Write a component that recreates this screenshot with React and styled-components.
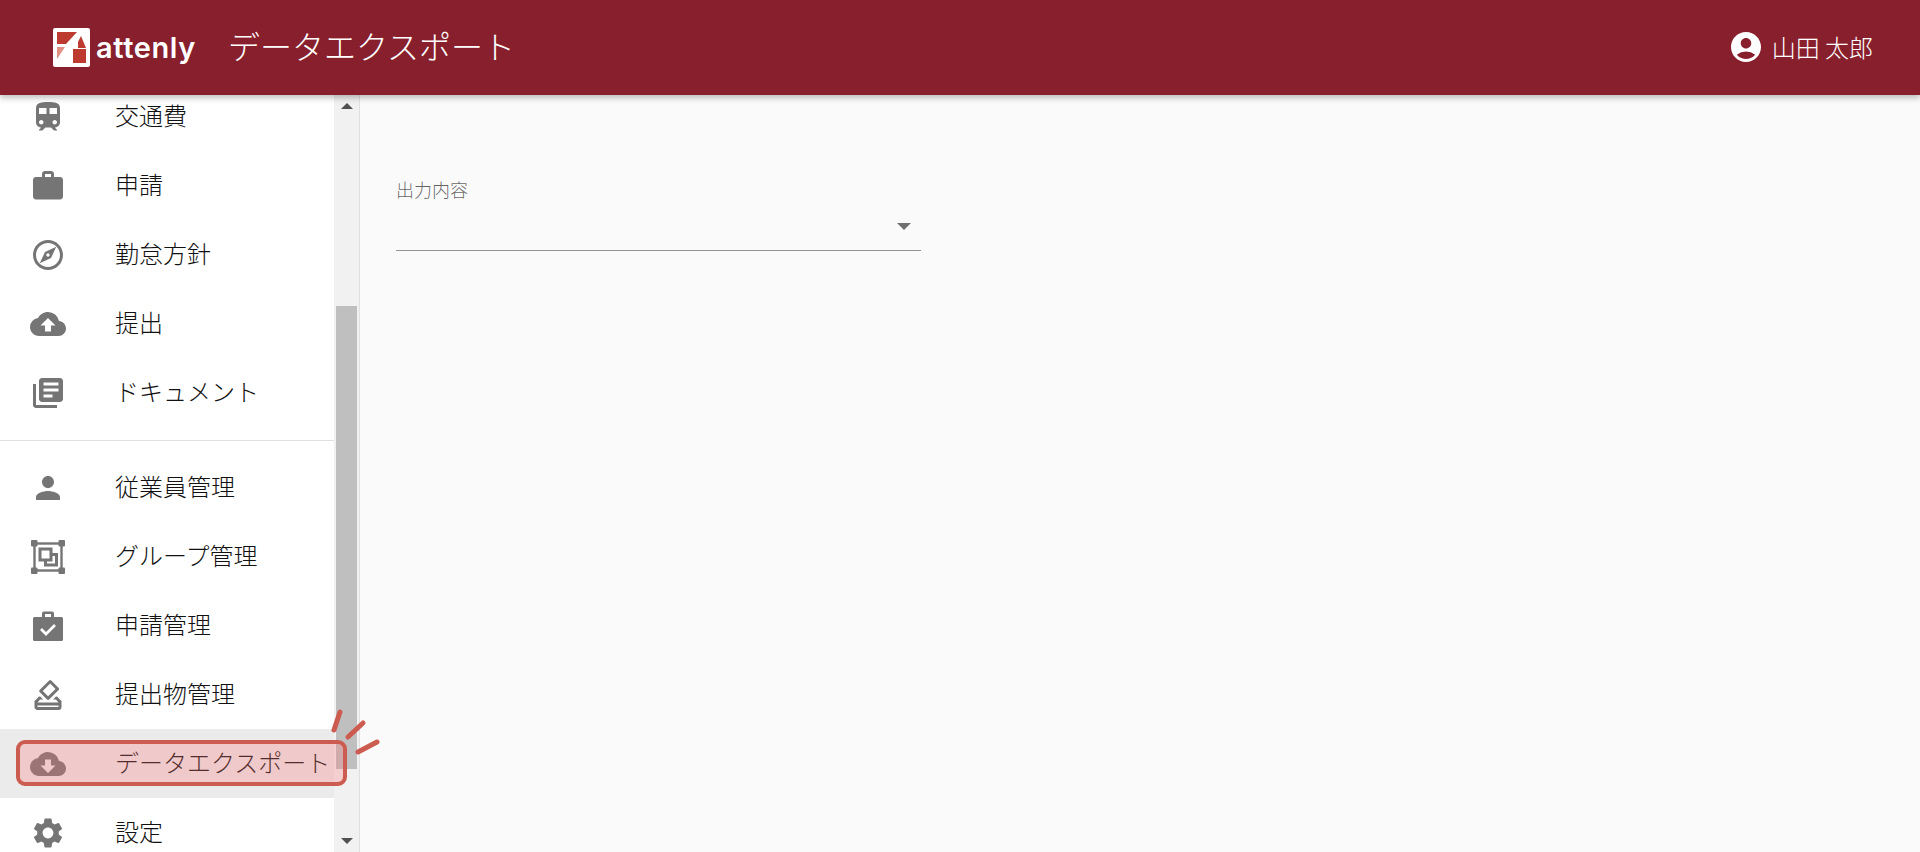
import React from "react";
import styled, { createGlobalStyle } from "styled-components";
import {
  MdTrain,
  MdWork,
  MdOutlineExplore,
  MdCloudUpload,
  MdLibraryBooks,
  MdPerson,
  MdOutlineHowToVote,
  MdCloudDownload,
  MdSettings,
  MdAccountCircle,
} from "react-icons/md";

const Global = createGlobalStyle`
  html, body { margin: 0; height: 100%; overflow: hidden; }
  body { background: #fafafa; font-family: "Noto Sans CJK JP", "Noto Sans", sans-serif; }
  #root { height: 100%; }
`;

const Page = styled.div`
  display: flex;
  flex-direction: column;
  width: 1920px;
  height: 852px;
  overflow: hidden;
`;

const Header = styled.header`
  position: relative;
  z-index: 2;
  flex: 0 0 95px;
  display: flex;
  align-items: center;
  padding: 0 47px 0 53px;
  background: #881f2d;
  color: #fff;
  box-shadow: 0 3px 6px rgba(0, 0, 0, 0.25);
`;

const Logo = styled.div`
  display: flex;
  align-items: center;
  gap: 6px;
  width: 175px;
  flex: none;
`;

const LogoWord = styled.span`
  font-family: "Inter", sans-serif;
  font-size: 29px;
  font-weight: 600;
  line-height: 38px;
  letter-spacing: 0.6px;
`;

const Title = styled.h1`
  margin: -6px 0 0;
  flex: 1;
  font-size: 32px;
  font-weight: 300;
  line-height: 44px;
`;

const User = styled.div`
  display: flex;
  align-items: center;
  gap: 8px;
  font-size: 24px;
  font-weight: 300;
  line-height: 32px;
  margin-top: -2px;
`;

const Body = styled.div`
  position: relative;
  flex: 1;
  display: flex;
  min-height: 0;
`;

const Sidebar = styled.aside`
  position: relative;
  flex: 0 0 360px;
  display: flex;
  background: #fff;
  border-right: 1px solid #e0e0e0;
  box-sizing: border-box;
  overflow: hidden;
`;

const MenuViewport = styled.nav`
  flex: 1;
  min-width: 0;
  overflow: hidden;
`;

const MenuScroll = styled.div`
  margin-top: -13px;
`;

const Row = styled.div`
  display: flex;
  align-items: center;
  height: 69px;
  padding-left: 30px;
  background: ${(p) => (p.$active ? "#ebebeb" : "transparent")};
`;

const IconSlot = styled.span`
  flex: 0 0 85px;
  display: flex;
  color: #757575;
`;

const Label = styled.span`
  font-size: 24px;
  font-weight: 300;
  line-height: 30px;
  margin-top: -3px;
  color: #111;
  white-space: nowrap;
`;

const Divider = styled.hr`
  margin: 13px 0 12px;
  border: 0;
  border-top: 1px solid #e0e0e0;
`;

const Scrollbar = styled.div`
  flex: 0 0 25px;
  display: flex;
  flex-direction: column;
  background: #f1f1f1;
`;

const ArrowCap = styled.div`
  flex: 0 0 22px;
  display: flex;
  align-items: center;
  justify-content: center;
`;

const ScrollTrack = styled.div`
  flex: 1;
  padding: 189px 2px 61px 2px;
  display: flex;
`;

const Thumb = styled.div`
  flex: 1;
  background: #bfbfbf;
`;

const Highlight = styled.div`
  position: absolute;
  left: 16px;
  top: 645px;
  width: 331px;
  height: 46px;
  box-sizing: border-box;
  border: 4.500px solid #cd5c50;
  border-radius: 9px;
  background: rgba(255, 120, 120, 0.28);
  pointer-events: none;
`;

const Sparks = styled.svg`
  position: absolute;
  left: 328px;
  top: 605px;
  z-index: 3;
  overflow: visible;
`;

const Main = styled.main`
  flex: 1;
  padding: 84px 36px 0;
  background: #fafafa;
`;

const Field = styled.div`
  width: 525px;
  display: flex;
  flex-direction: column;
`;

const FieldLabel = styled.label`
  font-size: 18px;
  font-weight: 300;
  line-height: 20px;
  color: rgba(0, 0, 0, 0.62);
`;

const Select = styled.div`
  height: 52px;
  display: flex;
  align-items: center;
  justify-content: flex-end;
  padding-right: 10px;
  border-bottom: 1.5px solid #949494;
  box-sizing: border-box;
`;

const Caret = styled.span`
  width: 0;
  height: 0;
  border-left: 7px solid transparent;
  border-right: 7px solid transparent;
  border-top: 7px solid #707070;
  margin-top: 3px;
`;

const ArrowGlyph = styled.span`
  width: 0;
  height: 0;
  border-left: 6px solid transparent;
  border-right: 6px solid transparent;
  ${(p) => (p.$down ? "border-top: 6px solid #505050;" : "border-bottom: 6px solid #505050;")}
`;

const LogoMark = () => (
  <svg width="37" height="39" viewBox="0 0 37 39">
    <rect width="37" height="39" rx="2" fill="#fff" />
    <path d="M4 4h20L13 16H4z" fill="#bd3a30" />
    <path d="M4 19h8L4 31z" fill="#e28f84" />
    <path d="M20 21h13v14H20z" fill="#bd3a30" />
    <path d="M25 14l3-6 5 12h-8z" fill="#bd3a30" />
    <path d="M11 35 L28 3" stroke="#fff" strokeWidth="2.500" fill="none" />
  </svg>
);

const GroupIcon = () => (
  <svg width="36" height="36" viewBox="0 0 36 36" fill="none">
    <rect x="4.500" y="4.500" width="27" height="27" stroke="#757575" strokeWidth="2.400" />
    <g fill="#757575">
      <rect x="1" y="1" width="6.500" height="6.500" rx="1" />
      <rect x="28.500" y="1" width="6.500" height="6.500" rx="1" />
      <rect x="1" y="28.500" width="6.500" height="6.500" rx="1" />
      <rect x="28.500" y="28.500" width="6.500" height="6.500" rx="1" />
    </g>
    <rect x="10" y="10" width="11" height="11" stroke="#757575" strokeWidth="3" />
    <path d="M21 15.500h5.500V26H15.500v-5" stroke="#757575" strokeWidth="3" />
  </svg>
);

const CaseCheckIcon = () => (
  <svg width="36" height="36" viewBox="0 0 36 36">
    <path
      d="M12 5.500a2 2 0 0 1 2-2h8a2 2 0 0 1 2 2V9h7.500A1.500 1.500 0 0 1 33 10.500V31.500A1.500 1.500 0 0 1 31.500 33h-27A1.500 1.500 0 0 1 3 31.500V10.500A1.500 1.500 0 0 1 4.500 9H12zM15 6v3h6V6z"
      fill="#757575"
      fillRule="evenodd"
    />
    <path d="M11 21l5 5 9-9" stroke="#fff" strokeWidth="2.800" fill="none" />
  </svg>
);

const top = [
  ["交通費", <MdTrain size={36} />],
  ["申請", <MdWork size={36} />],
  ["勤怠方針", <MdOutlineExplore size={36} />],
  ["提出", <MdCloudUpload size={36} />],
  ["ドキュメント", <MdLibraryBooks size={36} />],
];

const bottom = [
  ["従業員管理", <MdPerson size={36} />],
  ["グループ管理", <GroupIcon />],
  ["申請管理", <CaseCheckIcon />],
  ["提出物管理", <MdOutlineHowToVote size={36} />],
  ["データエクスポート", <MdCloudDownload size={36} />, true],
  ["設定", <MdSettings size={36} />],
];

const MenuRow = ({ item }) => (
  <Row $active={item[2]}>
    <IconSlot>{item[1]}</IconSlot>
    <Label>{item[0]}</Label>
  </Row>
);

export default function App() {
  return (
    <Page>
      <Global />
      <Header>
        <Logo>
          <LogoMark />
          <LogoWord>attenly</LogoWord>
        </Logo>
        <Title>データエクスポート</Title>
        <User>
          <MdAccountCircle size={36} />
          <span>山田 太郎</span>
        </User>
      </Header>
      <Body>
        <Sidebar>
          <MenuViewport>
            <MenuScroll>
              {top.map((i) => (
                <MenuRow key={i[0]} item={i} />
              ))}
              <Divider />
              {bottom.map((i) => (
                <MenuRow key={i[0]} item={i} />
              ))}
            </MenuScroll>
          </MenuViewport>
          <Scrollbar>
            <ArrowCap>
              <ArrowGlyph />
            </ArrowCap>
            <ScrollTrack>
              <Thumb />
            </ScrollTrack>
            <ArrowCap>
              <ArrowGlyph $down />
            </ArrowCap>
          </Scrollbar>
          <Highlight />
        </Sidebar>
        <Sparks width="50" height="50" viewBox="0 0 50 50" fill="none" stroke="#cd5c50" strokeWidth="5" strokeLinecap="round">
          <path d="M12 12L6 30" />
          <path d="M35 23L20 37" />
          <path d="M49 42L30 52" />
        </Sparks>
        <Main>
          <Field>
            <FieldLabel>出力内容</FieldLabel>
            <Select>
              <Caret />
            </Select>
          </Field>
        </Main>
      </Body>
    </Page>
  );
}
